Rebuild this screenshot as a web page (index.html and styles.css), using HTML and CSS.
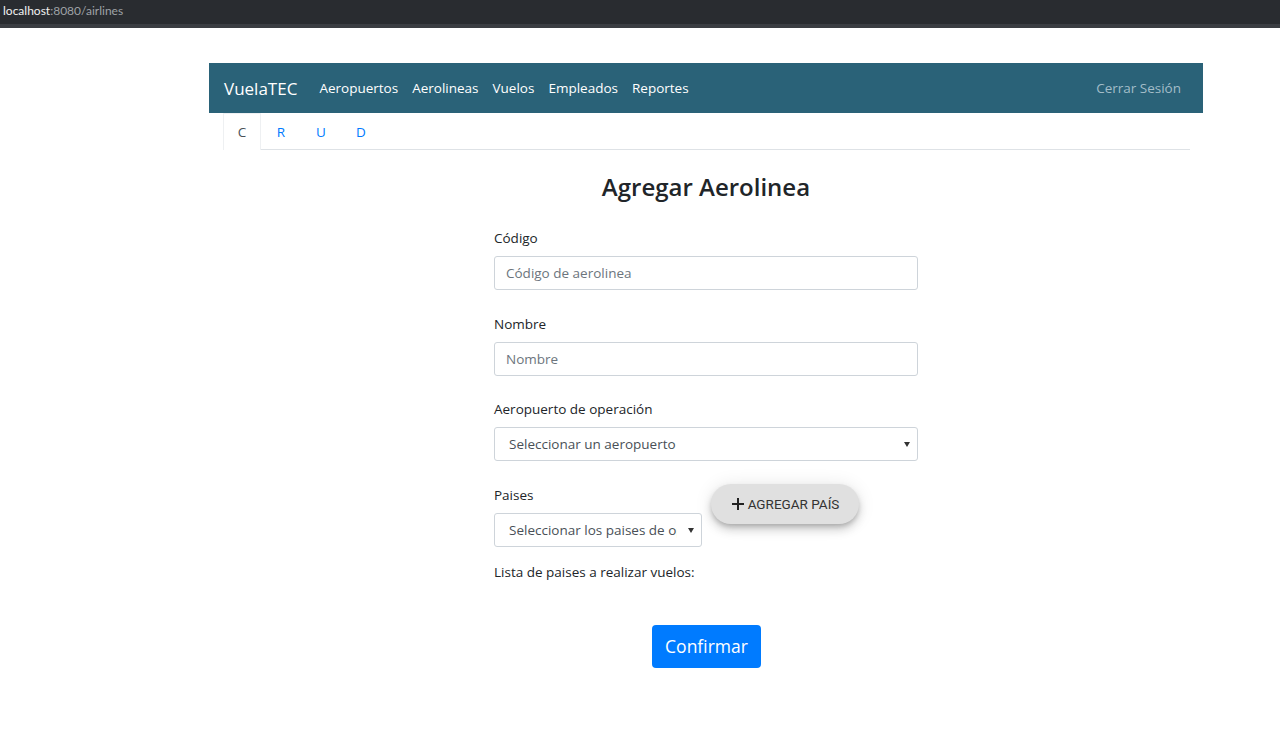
FILE: index.html
```html
<!DOCTYPE html>
<html lang="es">
<head>
<meta charset="utf-8">
<title>VuelaTEC</title>
<link rel="stylesheet" href="styles.css">
</head>
<body>
<div class="chrome"><span class="host">localhost</span><span class="path">:8080/airlines</span></div>
<div class="page">
  <nav class="navbar">
    <span class="brand">VuelaTEC</span>
    <ul class="links">
      <li>Aeropuertos</li>
      <li>Aerolineas</li>
      <li>Vuelos</li>
      <li>Empleados</li>
      <li>Reportes</li>
    </ul>
    <span class="logout">Cerrar Sesión</span>
  </nav>
  <ul class="tabs">
    <li class="tab active">C</li>
    <li class="tab">R</li>
    <li class="tab">U</li>
    <li class="tab">D</li>
  </ul>
  <h3 class="title">Agregar Aerolinea</h3>
  <form class="form">
    <div class="group">
      <label class="label">Código</label>
      <input class="control" type="text" placeholder="Código de aerolinea">
    </div>
    <div class="group">
      <label class="label">Nombre</label>
      <input class="control" type="text" placeholder="Nombre">
    </div>
    <div class="group">
      <label class="label">Aeropuerto de operación</label>
      <div class="select-wrap"><select class="control select"><option>Seleccionar un aeropuerto</option></select></div>
    </div>
    <div class="row">
      <div class="group small">
        <label class="label">Paises</label>
        <div class="select-wrap"><select class="control select"><option>Seleccionar los paises de operación</option></select></div>
      </div>
      <button type="button" class="fab"><svg width="14" height="14" viewBox="0 0 14 14"><path d="M7 1v12M1 7h12" stroke="#222" stroke-width="2"/></svg>AGREGAR PAÍS</button>
    </div>
    <p class="list">Lista de paises a realizar vuelos:</p>
    <div class="actions"><button type="button" class="confirm">Confirmar</button></div>
  </form>
</div>
</body>
</html>
```
FILE: styles.css
```css
* { box-sizing: border-box; }
body {
  margin: 0;
  background: #fff;
  font-family: "Open Sans", "Noto Sans", sans-serif;
  color: #212529;
}
.chrome {
  height: 28px;
  background: #292c30;
  border-bottom: 4px solid #3a3d42;
  padding: 3px 0 0 3px;
  font-family: "Lato", "Open Sans", sans-serif;
  font-size: 12px;
  line-height: 16px;
}
.chrome .host { color: #f1f1f1; }
.chrome .path { color: #9ea2a6; }
.page {
  width: 994px;
  margin: 35px 0 0 209px;
}
.navbar {
  height: 50px;
  background: #2a6278;
  display: flex;
  align-items: center;
  padding: 0 22px 0 15px;
}
.brand {
  color: #fff;
  font-size: 17px;
  margin-right: 15px;
}
.links {
  list-style: none;
  margin: 0;
  padding: 0;
  display: flex;
  flex: 1;
}
.links li {
  color: #fff;
  font-size: 13.5px;
  padding: 0 7px;
}
.logout {
  color: #a3bdc8;
  font-size: 13.5px;
}
.tabs {
  list-style: none;
  margin: 0 13px 0 14px;
  padding: 0;
  display: flex;
  height: 37px;
  border-bottom: 1px solid #dee2e6;
}
.tab {
  width: 40px;
  text-align: center;
  font-size: 13.5px;
  line-height: 36px;
  color: #007bff;
  border: 1px solid transparent;
  border-bottom: none;
  margin-bottom: -1px;
}
.tab.active {
  width: 38px;
  color: #495057;
  background: #fff;
  border-color: #eef0f2;
  height: 37px;
}
.title {
  margin: 21px 0 0;
  text-align: center;
  font-size: 24px;
  font-weight: 600;
  line-height: 32px;
  color: #212529;
}
.form {
  width: 424px;
  margin: 0 auto;
  padding-top: 25px;
}
.group { margin-bottom: 23.5px; }
.group.small { width: 208px; margin-bottom: 0; }
.label {
  display: block;
  font-size: 13.5px;
  line-height: 20px;
  margin-bottom: 8px;
}
.control {
  display: block;
  width: 100%;
  height: 34px;
  border: 1px solid #ced4da;
  border-radius: 3px;
  padding: 0 11px;
  font-family: inherit;
  font-size: 13.5px;
  color: #495057;
  background: #fff;
  outline: none;
}
.control::placeholder { color: #6c757d; }
.select {
  appearance: none;
  -webkit-appearance: none;
  padding: 0 24px 0 14px;
}
.select-wrap { position: relative; }
.select-wrap::after {
  content: "";
  position: absolute;
  right: 8px;
  top: 15px;
  border-left: 3px solid transparent;
  border-right: 3px solid transparent;
  border-top: 5px solid #333;
}
.row {
  display: flex;
  align-items: flex-start;
}
.fab {
  margin: -1px 0 0 9px;
  height: 40px;
  width: 148px;
  border: none;
  border-radius: 20px;
  background: #e0e0e0;
  box-shadow: 0 3px 5px -1px rgba(0,0,0,.2), 0 6px 10px 0 rgba(0,0,0,.14), 0 1px 18px 0 rgba(0,0,0,.1);
  font-family: Roboto, sans-serif;
  font-size: 13.5px;
  color: #333;
  display: flex;
  align-items: center;
  justify-content: center;
  gap: 3px;
  padding: 0;
}
.list {
  margin: 15px 0 0;
  font-size: 13.5px;
  line-height: 20px;
}
.actions {
  display: flex;
  justify-content: center;
  padding: 43px 0 0;
}
.confirm {
  width: 109px;
  height: 43px;
  border: none;
  border-radius: 4px;
  background: #007bff;
  color: #fff;
  font-family: inherit;
  font-size: 17.5px;
  margin-left: 1px;
}
```
